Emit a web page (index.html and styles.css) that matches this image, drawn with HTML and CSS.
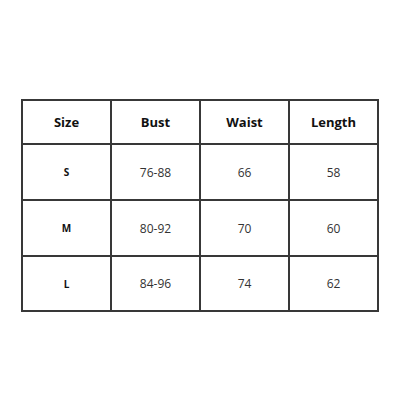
FILE: index.html
```html
<!DOCTYPE html>
<html>
<head>
<meta charset="utf-8">
<link rel="stylesheet" href="styles.css">
</head>
<body>
<div class="wrap">
<table class="chart">
<thead>
<tr class="head"><th>Size</th><th>Bust</th><th>Waist</th><th>Length</th></tr>
</thead>
<tbody>
<tr class="row"><td class="sz">S</td><td>76-88</td><td>66</td><td>58</td></tr>
<tr class="row"><td class="sz">M</td><td>80-92</td><td>70</td><td>60</td></tr>
<tr class="row last"><td class="sz">L</td><td>84-96</td><td>74</td><td>62</td></tr>
</tbody>
</table>
</div>
</body>
</html>
```
FILE: styles.css
```css
html, body {
  margin: 0;
  padding: 0;
  background: #fff;
}
.wrap {
  padding: 99px 0 0 21px;
}
.chart {
  border-collapse: collapse;
  table-layout: fixed;
  width: 358px;
  font-family: "Open Sans", "DejaVu Sans", sans-serif;
}
.chart th, .chart td {
  border: 2px solid #383838;
  text-align: center;
  vertical-align: middle;
  padding: 0;
}
.chart th {
  height: 42px;
  font-size: 13px;
  font-weight: 700;
  color: #111;
}
.chart td {
  height: 54px;
  font-size: 12px;
  color: #333;
}
.chart .last td {
  height: 53px;
}
.chart td.sz {
  font-size: 10px;
  font-weight: 700;
  color: #111;
}
```
